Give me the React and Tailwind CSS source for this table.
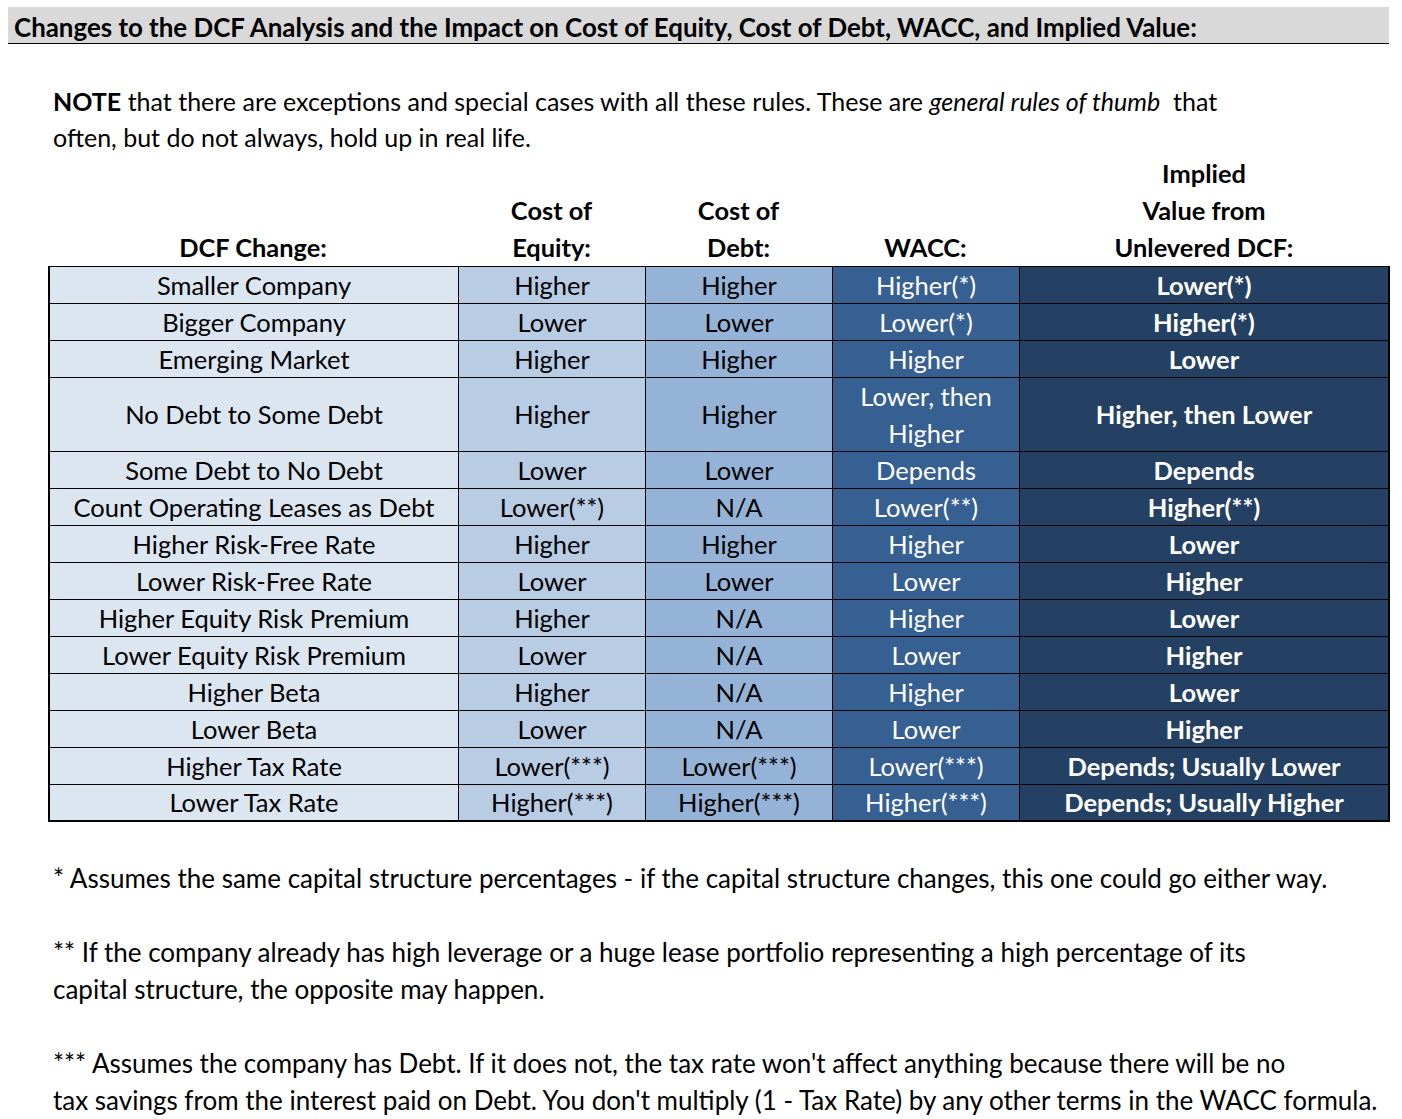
import React from "react";

const rows = [
  ["Smaller Company", "Higher", "Higher", "Higher(*)", "Lower(*)"],
  ["Bigger Company", "Lower", "Lower", "Lower(*)", "Higher(*)"],
  ["Emerging Market", "Higher", "Higher", "Higher", "Lower"],
  ["No Debt to Some Debt", "Higher", "Higher", "Lower, then\nHigher", "Higher, then Lower"],
  ["Some Debt to No Debt", "Lower", "Lower", "Depends", "Depends"],
  ["Count Operating Leases as Debt", "Lower(**)", "N/A", "Lower(**)", "Higher(**)"],
  ["Higher Risk-Free Rate", "Higher", "Higher", "Higher", "Lower"],
  ["Lower Risk-Free Rate", "Lower", "Lower", "Lower", "Higher"],
  ["Higher Equity Risk Premium", "Higher", "N/A", "Higher", "Lower"],
  ["Lower Equity Risk Premium", "Lower", "N/A", "Lower", "Higher"],
  ["Higher Beta", "Higher", "N/A", "Higher", "Lower"],
  ["Lower Beta", "Lower", "N/A", "Lower", "Higher"],
  ["Higher Tax Rate", "Lower(***)", "Lower(***)", "Lower(***)", "Depends; Usually Lower"],
  ["Lower Tax Rate", "Higher(***)", "Higher(***)", "Higher(***)", "Depends; Usually Higher"],
];

const cellBg = [
  "bg-[#dce6f1] text-black",
  "bg-[#b8cce4] text-black",
  "bg-[#95b3d7] text-black",
  "bg-[#366092] text-white",
  "bg-[#244062] text-white font-bold",
];

const colW = ["w-[409px]", "w-[187px]", "w-[187px]", "w-[187px]", "w-[370px]"];

export default function App() {
  return (
    <div
      className="w-[1402px] h-[1119px] bg-white text-black overflow-hidden"
      style={{ fontFamily: "Lato, 'Noto Sans', sans-serif" }}
    >
      <div className="pt-[7px] pl-[8px]">
        <div className="w-[1381px] h-[37px] bg-[#d9d9d9] border-b border-black pl-[6px] pt-[5px] flex items-center">
          <span className="text-[25.9px] font-bold leading-none whitespace-nowrap">
            Changes to the DCF Analysis and the Impact on Cost of Equity, Cost of Debt, WACC, and Implied Value:
          </span>
        </div>
      </div>

      <p className="mt-[39px] ml-[53px] text-[25px] leading-[36px] whitespace-nowrap">
        <span className="font-bold">NOTE</span> that there are exceptions and special cases with all these rules. These are{" "}
        <span className="italic">general rules of thumb</span>&nbsp; that
        <br />
        often, but do not always, hold up in real life.
      </p>

      <div className="ml-[48px]">
        <div className="flex text-[25.4px] font-bold leading-[37px] text-center">
          <div className="w-[410px] flex flex-col justify-end h-[111px]">
            <div>DCF Change:</div>
          </div>
          <div className="w-[187px] flex flex-col justify-end h-[111px]">
            <div>Cost of</div>
            <div>Equity:</div>
          </div>
          <div className="w-[187px] flex flex-col justify-end h-[111px]">
            <div>Cost of</div>
            <div>Debt:</div>
          </div>
          <div className="w-[187px] flex flex-col justify-end h-[111px]">
            <div>WACC:</div>
          </div>
          <div className="w-[370px] flex flex-col justify-end h-[111px]">
            <div>Implied</div>
            <div>Value from</div>
            <div>Unlevered DCF:</div>
          </div>
        </div>

        <div className="w-[1342px] border-t border-l-2 border-black text-[25.5px] leading-[37px]">
          {rows.map((r, i) => {
            const tall = r[3].includes("\n");
            return (
              <div key={i} className={`flex ${tall ? "h-[74px]" : "h-[37px]"}`}>
                {r.map((c, j) => (
                  <div
                    key={j}
                    className={`${colW[j]} shrink-0 ${j === 4 ? "border-r-2" : "border-r"} ${
                      i === rows.length - 1 ? "border-b-2" : "border-b"
                    } border-black flex flex-col items-center justify-center text-center ${cellBg[j]}`}
                  >
                    {c.split("\n").map((t, k) => (
                      <div key={k} className="whitespace-nowrap">
                        {t}
                      </div>
                    ))}
                  </div>
                ))}
              </div>
            );
          })}
        </div>
      </div>

      <div className="ml-[53px] mt-[38px] text-[26px] leading-[37px] whitespace-nowrap">
        <p>* Assumes the same capital structure percentages - if the capital structure changes, this one could go either way.</p>
        <p className="mt-[37px]">
          ** If the company already has high leverage or a huge lease portfolio representing a high percentage of its
          <br />
          capital structure, the opposite may happen.
        </p>
        <p className="mt-[37px]">
          *** Assumes the company has Debt. If it does not, the tax rate won't affect anything because there will be no
          <br />
          tax savings from the interest paid on Debt. You don't multiply (1 - Tax Rate) by any other terms in the WACC formula.
        </p>
      </div>
    </div>
  );
}
